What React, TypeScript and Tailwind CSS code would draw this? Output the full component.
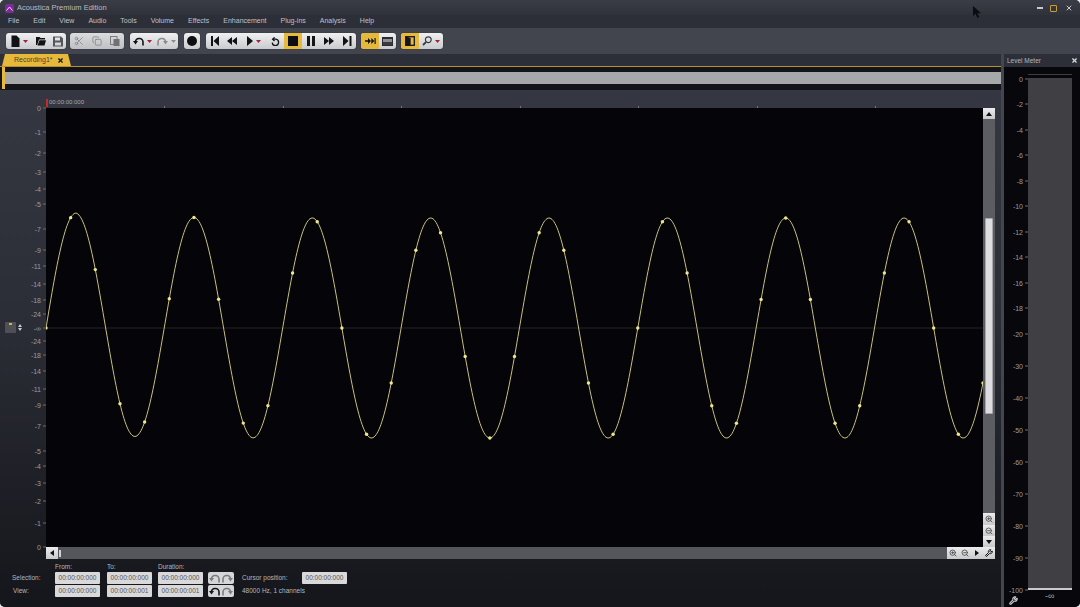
import { ReactNode } from "react";
import { Copy, Scissors, Wrench, X, ZoomIn, ZoomOut } from "lucide-react";

const menus = ["File", "Edit", "View", "Audio", "Tools", "Volume", "Effects", "Enhancement", "Plug-ins", "Analysis", "Help"];

const PLOT_W = 937;
const PLOT_H = 439;
const MID = 220;
const PERIOD = (PLOT_W / 38) * 4.8;

function sampleY(x: number) {
  const drift = x < 30 ? (x / 30) * 5 : 5 * Math.exp(-(x - 30) / 50);
  return MID - 110 * Math.sin((2 * Math.PI * x) / PERIOD) - drift;
}

function wavePath() {
  let d = "";
  for (let x = 0; x <= PLOT_W; x += 1) {
    d += `${x === 0 ? "M" : "L"}${x} ${sampleY(x).toFixed(2)} `;
  }
  return d;
}

const dots = Array.from({ length: 39 }, (_, i) => (i * PLOT_W) / 38);

const rulerTicks = ["left-[118px]", "left-[237px]", "left-[355px]", "left-[474px]", "left-[592px]", "left-[711px]", "left-[829px]"];

const dbScale = [
  { label: "0", y: 108 },
  { label: "-1", y: 132 },
  { label: "-2", y: 153 },
  { label: "-3", y: 172 },
  { label: "-4", y: 189 },
  { label: "-5", y: 204 },
  { label: "-7", y: 229 },
  { label: "-9", y: 250 },
  { label: "-11", y: 266 },
  { label: "-14", y: 284 },
  { label: "-18", y: 300 },
  { label: "-24", y: 314 },
  { label: "-∞", y: 328 },
  { label: "-24", y: 341 },
  { label: "-18", y: 355 },
  { label: "-14", y: 371 },
  { label: "-11", y: 389 },
  { label: "-9", y: 405 },
  { label: "-7", y: 426 },
  { label: "-5", y: 451 },
  { label: "-4", y: 466 },
  { label: "-3", y: 483 },
  { label: "-2", y: 501 },
  { label: "-1", y: 523 },
  { label: "0", y: 547 },
];

const meterScale = [
  { label: "0", y: 79 },
  { label: "-2", y: 104 },
  { label: "-4", y: 130 },
  { label: "-6", y: 155 },
  { label: "-8", y: 181 },
  { label: "-10", y: 206 },
  { label: "-12", y: 232 },
  { label: "-14", y: 257 },
  { label: "-16", y: 283 },
  { label: "-18", y: 308 },
  { label: "-20", y: 334 },
  { label: "-30", y: 366 },
  { label: "-40", y: 398 },
  { label: "-50", y: 430 },
  { label: "-60", y: 462 },
  { label: "-70", y: 494 },
  { label: "-80", y: 526 },
  { label: "-90", y: 558 },
  { label: "-100", y: 590 },
];

function Glyph({ children, w = 14 }: { children: ReactNode; w?: number }) {
  return (
    <svg width={w} height={14} viewBox={`0 0 ${w} 14`} fill="currentColor">
      {children}
    </svg>
  );
}

function Caret({ color = "text-[#a3213f]" }: { color?: string }) {
  return (
    <svg width={5} height={3} viewBox="0 0 5 3" className={color} fill="currentColor">
      <path d="M0 0h5L2.500 3z" />
    </svg>
  );
}

function Btn({ children, w = 18, active = false }: { children: ReactNode; w?: number; active?: boolean }) {
  return (
    <div
      className={`flex h-full items-center justify-center gap-[3px] ${active ? "bg-[#e6b83c]" : ""}`}
      style={{ width: w }}
    >
      {children}
    </div>
  );
}

function Group({ children, dim = false }: { children: ReactNode; dim?: boolean }) {
  return (
    <div
      className={`flex h-[16px] items-center overflow-hidden rounded-[3px] bg-gradient-to-b text-[#111216] shadow-[0_0_1px_#15161a] ${
        dim ? "from-[#dcdcde] to-[#bfc0c3]" : "from-[#f0f0f1] to-[#cacbce]"
      }`}
    >
      {children}
    </div>
  );
}

function Field({ value }: { value: string }) {
  return (
    <div className="flex h-[12px] w-[45px] items-center justify-center rounded-[1px] bg-[#d9d9da] text-[6.5px] text-[#55565a]">
      {value}
    </div>
  );
}

function UndoArrow({ flip = false }: { flip?: boolean }) {
  return (
    <svg width={11} height={9} viewBox="0 0 11 9" fill="none" stroke="currentColor" strokeWidth={1.600} className={flip ? "-scale-x-100" : ""}>
      <path d="M10 8.500V5a3.500 3.500 0 0 0-3.500-3.500H5.800A3.300 3.300 0 0 0 2.500 4.800" />
      <path d="M0 4h5L2.500 7.500z" fill="currentColor" stroke="none" />
    </svg>
  );
}

function SmallBtn({ children, tall = false }: { children: ReactNode; tall?: boolean }) {
  return (
    <div
      className={`flex w-[12px] items-center justify-center bg-gradient-to-b from-[#ececed] to-[#c8c9cb] text-[#45464b] ${
        tall ? "h-[12px]" : "h-[11px]"
      }`}
    >
      {children}
    </div>
  );
}

export default function App() {
  return (
    <div className="relative h-[607px] w-[1080px] overflow-hidden bg-[#e9e9ec] font-['Liberation_Sans',sans-serif]">
      <div className="flex h-full w-full flex-col overflow-hidden rounded-[5px] bg-[#2e3039]">
        {/* title bar */}
        <div className="flex h-[15px] items-center bg-gradient-to-b from-[#3b3d46] to-[#30323b] pl-[5px] pr-[7px] pt-[1px]">
          <div className="flex h-[9px] w-[9px] items-center justify-center rounded-[2px] bg-[#7e2a9c]">
            <svg width={7} height={5} viewBox="0 0 7 5" fill="none" stroke="#f1d9f7" strokeWidth={1}>
              <path d="M0.500 4.500 3.500 1l3 3.500" />
            </svg>
          </div>
          <span className="ml-[3px] text-[7.5px] text-[#b9babf]">Acoustica Premium Edition</span>
          <div className="ml-auto flex items-center">
            <div className="h-[1.500px] w-[6px] bg-[#c9cacc]" />
            <div className="ml-[7px] h-[7px] w-[7px] rounded-[1px] border border-[#c99f35]" />
            <X size={8} strokeWidth={3} className="ml-[8px] text-[#c9cacc]" />
          </div>
        </div>

        {/* menu bar */}
        <div className="flex h-[13px] items-center gap-[14px] bg-[#2c2e38] pl-[8px] text-[7px] text-[#c0c1c6]">
          {menus.map((m) => (
            <span key={m}>{m}</span>
          ))}
        </div>

        {/* toolbar */}
        <div className="flex h-[26px] items-center bg-[#42454e] pl-[6px]">
          <Group>
            <Btn w={26}>
              <Glyph w={9}><path d="M0.500 1.500h5l3 3v8.500h-8z" /></Glyph>
              <Caret />
            </Btn>
            <Btn w={17}>
              <Glyph w={10}><path d="M0 3h3.500l1 1H9v1.500H3L1.200 11H0zM3.500 6.300H10L8.500 11.500H1.500z" /></Glyph>
            </Btn>
            <Btn w={17}>
              <Glyph w={10}><path d="M0 2.500h8l2 2v8H0zM2 3.500v3h5v-3zM2 8.500v3h6v-3z" fill="#55565a" fillRule="evenodd" /></Glyph>
            </Btn>
          </Group>
          <div className="w-[4px]" />
          <Group dim>
            <Btn><Scissors size={10} className="text-[#85868a]" /></Btn>
            <Btn><Copy size={10} className="text-[#85868a]" /></Btn>
            <Btn>
              <svg width={10} height={10} viewBox="0 0 10 10">
                <rect x={0.500} y={0.500} width={6.500} height={8} fill="none" stroke="#7c7d81" />
                <rect x={3.500} y={3} width={6} height={7} fill="#707175" />
              </svg>
            </Btn>
          </Group>
          <div className="w-[6px]" />
          <Group>
            <Btn w={24}>
              <span className="text-[#111216]"><UndoArrow /></span>
              <Caret />
            </Btn>
            <Btn w={24}>
              <span className="text-[#8b8c90]"><UndoArrow flip /></span>
              <Caret color="text-[#8b8c90]" />
            </Btn>
          </Group>
          <div className="w-[6px]" />
          <Group>
            <Btn w={16}>
              <div className="h-[10px] w-[10px] rounded-full bg-[#0d0e11]" />
            </Btn>
          </Group>
          <div className="w-[6px]" />
          <Group>
            <Btn w={17}><Glyph w={9}><path d="M1 2h2v10H1zM9 2v10L3.500 7z" /></Glyph></Btn>
            <Btn w={18}><Glyph w={10}><path d="M5 3v8L0 7zM10 3v8L5 7z" /></Glyph></Btn>
            <Btn w={25}>
              <Glyph w={7}><path d="M1 2v10l6-5z" /></Glyph>
              <Caret />
            </Btn>
            <Btn w={18}>
              <svg width={9} height={9} viewBox="0 0 9 9" fill="none" stroke="currentColor" strokeWidth={1.300}>
                <path d="M2 2.200h2.800a3.200 3.200 0 1 1-3.600 3.400" />
                <path d="M3.600.4 1.600 2.200l2 1.800" fill="none" />
              </svg>
            </Btn>
            <Btn active>
              <div className="h-[10px] w-[10px] bg-[#0d0e11]" />
            </Btn>
            <Btn>
              <div className="flex gap-[2px]">
                <div className="h-[10px] w-[3px] bg-[#15161a]" />
                <div className="h-[10px] w-[3px] bg-[#15161a]" />
              </div>
            </Btn>
            <Btn><Glyph w={10}><path d="M0 3v8l5-4zM5 3v8l5-4z" /></Glyph></Btn>
            <Btn><Glyph w={9}><path d="M0 2v10l5.500-5zM6.500 2h2v10h-2z" /></Glyph></Btn>
          </Group>
          <div className="w-[5px]" />
          <Group>
            <Btn active>
              <Glyph w={11}><path d="M0 6.300h4V7.700H0zM3 4 6 7 3 10zM6.300 4l3 3-3 3zM9.500 4h1.200v6H9.500z" /></Glyph>
            </Btn>
            <Btn w={17}>
              <svg width={11} height={9} viewBox="0 0 11 9">
                <rect width={11} height={9} fill="#2b2c30" />
                <rect x={1} y={2} width={9} height={6} fill="#8f9094" />
                <rect x={1} y={5} width={9} height={3} fill="#3a3b40" />
              </svg>
            </Btn>
          </Group>
          <div className="w-[5px]" />
          <Group>
            <Btn active>
              <svg width={10} height={10} viewBox="0 0 10 10" fill="none" stroke="#15161a" strokeWidth={1.300}>
                <rect x={0.700} y={0.700} width={8.600} height={8.600} />
                <path d="M1 1l4 1.500v6.500L1 9z" fill="#15161a" />
              </svg>
            </Btn>
            <Btn w={24}>
              <svg width={10} height={10} viewBox="0 0 10 10" fill="none" stroke="#3b3c40" strokeWidth={1.200}>
                <circle cx={6.300} cy={3.700} r={2.900} />
                <path d="M4.200 5.800 1 9" strokeWidth={1.800} />
              </svg>
              <Caret />
            </Btn>
          </Group>
        </div>

        <div className="flex min-h-0 flex-1">
          {/* editor */}
          <div className="flex w-[1001px] flex-col bg-gradient-to-b from-[#363943] via-[#2b2d36] to-[#15161b]">
            {/* tabs */}
            <div className="flex h-[12px] bg-[#2c2e38] pl-[2px]">
              <div className="flex h-[12px] w-[69px] items-center gap-[4px] bg-[#e6b83c] pl-[12px] text-[7px] text-[#4d4326] [clip-path:polygon(3px_0,calc(100%-3px)_0,100%_100%,0_100%)]">
                <span>Recording1*</span>
                <X size={7} strokeWidth={4} className="text-[#16171b]" />
              </div>
            </div>
            {/* overview */}
            <div className="flex h-[24px] border-t border-[#b5922f] bg-[#14151a] pl-[2px]">
              <div className="h-[22px] w-[3px] bg-[#e6b83c]" />
              <div className="mt-[5px] h-[12px] flex-1 bg-[#a7a8aa]" />
            </div>

            <div className="flex min-h-0 flex-1 flex-col">
              {/* ruler */}
              <div className="flex h-[18px] items-end">
                <div className="w-[46px]" />
                <div className="relative h-[9px] flex-1">
                  <div className="absolute left-0 top-0 h-[8px] w-[2px] bg-[#c52a2a]" />
                  <span className="absolute left-[3px] top-0 text-[6px] leading-[7px] text-[#a8a9ad]">00:00:00:000</span>
                  {rulerTicks.map((t) => (
                    <div key={t} className={`absolute bottom-0 h-[2px] w-px bg-[#74767c] ${t}`} />
                  ))}
                </div>
              </div>

              <div className="flex">
                {/* dB gutter */}
                <div className="relative h-[439px] w-[46px] shrink-0">
                  {dbScale.map((t) => (
                    <div
                      key={`${t.label}-${t.y}`}
                      className="absolute right-0 flex -translate-y-1/2 items-center gap-[2px] text-[7px] leading-none text-[#9a9ba0]"
                      style={{ top: t.y - 108 }}
                    >
                      <span>{t.label}</span>
                      <div className="h-px w-[3px] bg-[#6b6d73]" />
                    </div>
                  ))}
                  <div className="absolute left-[5px] top-[214px] flex h-[11px] w-[11px] items-start justify-center rounded-[1px] bg-[#4e5056]">
                    <div className="mt-[1px] h-[2px] w-[3px] bg-[#d9b13f]" />
                  </div>
                  <div className="absolute left-[18px] top-[216px] flex flex-col gap-[1px]">
                    <svg width={4} height={3} viewBox="0 0 4 3" fill="#c9cacc"><path d="M0 3 2 0l2 3z" /></svg>
                    <svg width={4} height={3} viewBox="0 0 4 3" fill="#c9cacc"><path d="M0 0h4L2 3z" /></svg>
                  </div>
                </div>

                {/* waveform */}
                <div className="h-[439px] w-[937px] shrink-0 bg-[#050509]">
                  <svg width={PLOT_W} height={PLOT_H} viewBox={`0 0 ${PLOT_W} ${PLOT_H}`}>
                    <line x1={0} y1={MID} x2={PLOT_W} y2={MID} stroke="#252527" strokeWidth={1} />
                    <path d={wavePath()} fill="none" stroke="#c9bf7a" strokeWidth={1} />
                    {dots.map((x) => (
                      <circle key={x} cx={x} cy={sampleY(x)} r={1.700} fill="#f0e68c" />
                    ))}
                  </svg>
                </div>

                {/* vertical scrollbar */}
                <div className="flex h-[439px] w-[12px] shrink-0 flex-col items-center bg-[#5c5d62]">
                  <SmallBtn>
                    <svg width={6} height={4} viewBox="0 0 6 4" fill="#111216"><path d="M0 4 3 0l3 4z" /></svg>
                  </SmallBtn>
                  <div className="mt-[99px] h-[196px] w-[8px] rounded-[1px] border border-[#a9aaad] bg-[#dddde0]" />
                  <div className="flex-1" />
                  <SmallBtn tall><ZoomIn size={8} strokeWidth={2.500} /></SmallBtn>
                  <SmallBtn><ZoomOut size={8} strokeWidth={2.500} /></SmallBtn>
                  <SmallBtn>
                    <svg width={6} height={4} viewBox="0 0 6 4" fill="#111216"><path d="M0 0h6L3 4z" /></svg>
                  </SmallBtn>
                </div>
              </div>

              {/* horizontal scrollbar */}
              <div className="ml-[46px] flex h-[12px] w-[949px] items-center bg-[#55565b]">
                <SmallBtn tall>
                  <svg width={4} height={6} viewBox="0 0 4 6" fill="#111216"><path d="M4 0v6L0 3z" /></svg>
                </SmallBtn>
                <div className="ml-[1px] h-[7px] w-[2px] bg-[#d0d1d3]" />
                <div className="flex-1" />
                <SmallBtn tall><ZoomIn size={8} strokeWidth={2.500} /></SmallBtn>
                <SmallBtn tall><ZoomOut size={8} strokeWidth={2.500} /></SmallBtn>
                <SmallBtn tall>
                  <svg width={4} height={6} viewBox="0 0 4 6" fill="#111216"><path d="M0 0v6l4-3z" /></svg>
                </SmallBtn>
                <SmallBtn tall><Wrench size={8} strokeWidth={3} className="text-[#111216]" /></SmallBtn>
              </div>

              {/* selection info */}
              <div className="mt-[3px] flex flex-col text-[6.5px] text-[#b5b6ba]">
                <div className="flex h-[10px] items-center pl-[55px]">
                  <span className="w-[52px]">From:</span>
                  <span className="w-[51px]">To:</span>
                  <span>Duration:</span>
                </div>
                <div className="flex h-[12px] items-center">
                  <span className="w-[55px] pl-[12px]">Selection:</span>
                  <Field value="00:00:00:000" />
                  <div className="w-[7px]" />
                  <Field value="00:00:00:000" />
                  <div className="w-[6px]" />
                  <Field value="00:00:00:000" />
                  <div className="ml-[5px] flex h-[12px] w-[26px] items-center justify-around rounded-[2px] bg-[#d5d6d8] text-[#7b7c80]">
                    <UndoArrow />
                    <UndoArrow flip />
                  </div>
                  <span className="ml-[8px] w-[60px]">Cursor position:</span>
                  <Field value="00:00:00:000" />
                </div>
                <div className="mt-[1px] flex h-[12px] items-center">
                  <span className="w-[55px] pl-[13px]">View:</span>
                  <Field value="00:00:00:000" />
                  <div className="w-[7px]" />
                  <Field value="00:00:00:001" />
                  <div className="w-[6px]" />
                  <Field value="00:00:00:001" />
                  <div className="ml-[5px] flex h-[12px] w-[26px] items-center justify-around rounded-[2px] bg-[#d5d6d8]">
                    <span className="text-[#17181c]"><UndoArrow /></span>
                    <span className="text-[#7b7c80]"><UndoArrow flip /></span>
                  </div>
                  <span className="ml-[8px]">48000 Hz, 1 channels</span>
                </div>
              </div>
            </div>
          </div>

          {/* splitter */}
          <div className="w-[3px] bg-[#43464e]" />

          {/* level meter */}
          <div className="flex flex-1 flex-col">
            <div className="flex h-[13px] items-center justify-between bg-[#2c2e38] pl-[3px] pr-[2px] text-[6.5px] text-[#b5b6ba]">
              <span>Level Meter</span>
              <X size={7} strokeWidth={4} className="text-[#d9d9da]" />
            </div>
            <div className="relative flex-1 bg-[#08080c]">
              {meterScale.map((t) => (
                <div
                  key={t.label}
                  className="absolute right-[52px] flex -translate-y-1/2 items-center gap-[2px] text-[7px] leading-none text-[#9a9ba0]"
                  style={{ top: t.y - 67 }}
                >
                  <span>{t.label}</span>
                  <div className="h-px w-[3px] bg-[#6b6d73]" />
                </div>
              ))}
              <div className="absolute left-[24px] top-[7px] h-px w-[44px] bg-[#3f3e42]" />
              <div className="absolute left-[24px] top-[11px] h-[510px] w-[44px] bg-[#403f43]" />
              <div className="absolute left-[24px] top-[521px] h-[2px] w-[44px] bg-[#c9cacc]" />
              <span className="absolute left-[41px] top-[525px] text-[9px] leading-none text-[#a5a6aa]">-∞</span>
              <Wrench size={9} strokeWidth={3} className="absolute left-[5px] top-[529px] text-[#c9cacc]" />
            </div>
          </div>
        </div>
      </div>
      {/* mouse pointer */}
      <svg width={9} height={12} viewBox="0 0 9 12" fill="#0c0c0e" className="absolute left-[973px] top-[6px]">
        <path d="M0 0v10l2.500-2.200L4.500 12l1.800-.8-2-4H8z" />
      </svg>
    </div>
  );
}
